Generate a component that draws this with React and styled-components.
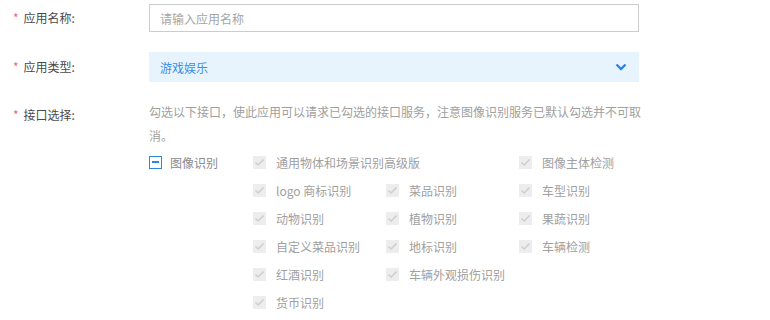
import React from 'react';
import styled, { createGlobalStyle } from 'styled-components';

const GlobalStyle = createGlobalStyle`
  body {
    margin: 0;
    background: #fff;
    font-family: "Noto Sans CJK SC", "Noto Sans", sans-serif;
  }
`;

const Form = styled.div`
  padding-top: 4px;
  width: 770px;
`;

const Row = styled.div`
  display: flex;
  align-items: flex-start;
  margin-bottom: ${(p) => p.gap || 0}px;
`;

const Label = styled.div`
  width: 136px;
  padding-left: 13px;
  flex-shrink: 0;
  font-size: 12px;
  color: #4a4a4a;
  height: ${(p) => p.h}px;
  line-height: ${(p) => p.h}px;
  span {
    color: #f0657a;
    margin-right: 5px;
  }
`;

const Input = styled.input`
  box-sizing: border-box;
  width: 490px;
  height: 28px;
  border: 1px solid #ccc;
  padding: 0 10px;
  font-family: inherit;
  font-size: 12px;
  color: #333;
  outline: none;
  &::placeholder {
    color: #a5a5a5;
  }
`;

const Select = styled.div`
  box-sizing: border-box;
  width: 490px;
  height: 30px;
  background: #e8f4fd;
  padding: 0 12px 0 11px;
  display: flex;
  align-items: center;
  justify-content: space-between;
  font-size: 12px;
  color: #3a8ee6;
`;

const Field = styled.div`
  width: 497px;
`;

const Desc = styled.div`
  font-size: 12px;
  line-height: 24px;
  color: #a0a0a0;
`;

const Group = styled.div`
  display: flex;
`;

const Parent = styled.div`
  width: 104px;
  flex-shrink: 0;
  height: 28px;
  display: flex;
  align-items: center;
  font-size: 12px;
  color: #8a8a8a;
`;

const MinusBox = styled.i`
  box-sizing: border-box;
  width: 13px;
  height: 13px;
  border: 1.5px solid #2b86e4;
  margin-right: 8px;
  display: flex;
  align-items: center;
  justify-content: center;
  &::after {
    content: '';
    width: 7px;
    height: 1.5px;
    background: #2b86e4;
  }
`;

const Grid = styled.div`
  flex-shrink: 0;
  display: grid;
  grid-template-columns: repeat(3, 133px);
  grid-auto-rows: 28px;
`;

const Item = styled.div`
  display: flex;
  align-items: center;
  font-size: 12px;
  color: #a0a0a0;
  white-space: nowrap;
  grid-column: span ${(p) => p.span || 1};
`;

const Check = styled.i`
  width: 13px;
  height: 13px;
  background: #ededed;
  margin-right: 10px;
  display: flex;
  align-items: center;
  justify-content: center;
`;

function CheckItem({ text, span }) {
  return (
    <Item span={span}>
      <Check>
        <svg width="11" height="9" viewBox="0 0 11 9">
          <polyline points="1.5,4.5 4.2,7 9.5,1.5" fill="none" stroke="#cfcfcf" strokeWidth="1.6" />
        </svg>
      </Check>
      {text}
    </Item>
  );
}

const items = [
  { text: '通用物体和场景识别高级版', span: 2 },
  { text: '图像主体检测' },
  { text: 'logo 商标识别' },
  { text: '菜品识别' },
  { text: '车型识别' },
  { text: '动物识别' },
  { text: '植物识别' },
  { text: '果蔬识别' },
  { text: '自定义菜品识别' },
  { text: '地标识别' },
  { text: '车辆检测' },
  { text: '红酒识别' },
  { text: '车辆外观损伤识别', span: 2 },
  { text: '货币识别' },
];

export default function App() {
  return (
    <>
      <GlobalStyle />
      <Form>
        <Row gap={20}>
          <Label h={28}><span>*</span>应用名称:</Label>
          <Input placeholder="请输入应用名称" />
        </Row>
        <Row gap={18}>
          <Label h={30}><span>*</span>应用类型:</Label>
          <Select>
            游戏娱乐
            <svg width="12" height="8" viewBox="0 0 12 8">
              <polyline points="1.5,1.5 6,6 10.5,1.5" fill="none" stroke="#2f80e7" strokeWidth="2.4" />
            </svg>
          </Select>
        </Row>
        <Row>
          <Label h={30}><span>*</span>接口选择:</Label>
          <Field>
            <Desc>勾选以下接口，使此应用可以请求已勾选的接口服务，注意图像识别服务已默认勾选并不可取消。</Desc>
            <Group>
              <Parent>
                <MinusBox />
                图像识别
              </Parent>
              <Grid>
                {items.map((it) => (
                  <CheckItem key={it.text} text={it.text} span={it.span} />
                ))}
              </Grid>
            </Group>
          </Field>
        </Row>
      </Form>
    </>
  );
}
